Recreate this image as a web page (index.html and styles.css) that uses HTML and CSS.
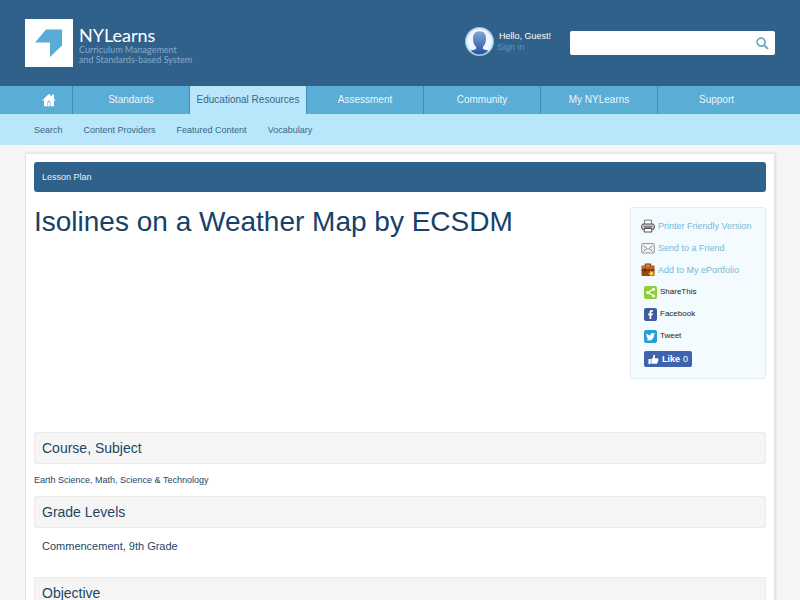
FILE: index.html
```html
<!DOCTYPE html>
<html lang="en">
<head>
<meta charset="utf-8">
<meta name="viewport" content="width=device-width, initial-scale=1">
<title>NYLearns - Isolines on a Weather Map</title>
<link rel="stylesheet" href="styles.css">
</head>
<body>
<header class="header">
  <a class="brand" href="#">
    <svg class="brand-mark" viewBox="0 0 48 48" aria-hidden="true"><path fill="#fff" d="M0 0h48v48H0z"/><path fill="#58acd6" d="M21 10.500h16v16L25 38V23.500H10z"/></svg>
    <span class="brand-text">
      <span class="brand-name">NYLearns</span>
      <span class="brand-tag">Curriculum Management</span>
      <span class="brand-tag">and Standards-based System</span>
    </span>
  </a>
  <div class="user">
    <svg class="avatar" viewBox="0 0 28 28" aria-hidden="true">
      <defs><linearGradient id="face" x1="0" y1="0" x2="0" y2="1"><stop offset="0" stop-color="#84a7d8"/><stop offset="1" stop-color="#28519c"/></linearGradient></defs>
      <circle cx="14" cy="14" r="13.500" fill="#d4ecfb" stroke="#8dc0e6"/>
      <circle cx="14" cy="14" r="11.500" fill="#edf7fd"/>
      <path fill="url(#face)" d="M14 4c4.500 0 6.500 3 6.300 7.500-.1 3.500-1.300 6-3 7.500v2.200c1.500.8 4 1 5.200 1.800a12 12 0 0 1-17 0c1.200-.8 3.700-1 5.200-1.800V19c-1.700-1.500-2.900-4-3-7.500C7.500 7 9.500 4 14 4z"/>
    </svg>
    <div class="user-text">
      <span class="hello">Hello, Guest!</span>
      <a class="signin" href="#">Sign in</a>
    </div>
  </div>
  <form class="search" role="search">
    <input class="search-input" type="search" aria-label="Search">
    <button class="search-button" type="button" aria-label="Go">
      <svg class="search-icon" viewBox="0 0 14 14" aria-hidden="true"><circle cx="5.500" cy="5.500" r="4.300" fill="none" stroke="#69a3bd" stroke-width="1.700"/><path d="M8.800 8.800l4 4" stroke="#69a3bd" stroke-width="2.200"/></svg>
    </button>
  </form>
</header>
<nav class="nav" aria-label="Main">
  <a class="nav-item nav-home" href="#" aria-label="Home"><svg class="home-icon" viewBox="0 0 14 14" aria-hidden="true"><path fill="#fff" d="M7 .8l3 2.800V1.500h2v4L13.800 7.500H12V13.300H2V7.500H.2z"/><path fill="#8fc7e2" d="M5.300 13V9.300a1.700 1.700 0 0 1 3.400 0V13h-.9V9.500H6.200V13z"/></svg></a>
  <a class="nav-item" href="#">Standards</a>
  <a class="nav-item nav-current" href="#" aria-current="page">Educational Resources</a>
  <a class="nav-item" href="#">Assessment</a>
  <a class="nav-item" href="#">Community</a>
  <a class="nav-item" href="#">My NYLearns</a>
  <a class="nav-item" href="#">Support</a>
</nav>
<nav class="subnav" aria-label="Educational Resources">
  <a href="#">Search</a>
  <a href="#">Content Providers</a>
  <a href="#">Featured Content</a>
  <a href="#">Vocabulary</a>
</nav>
<main class="card">
  <div class="banner">Lesson Plan</div>
  <div class="intro">
    <h1 class="title">Isolines on a Weather Map by ECSDM</h1>
    <aside class="tools">
      <a class="tool" href="#"><svg class="tool-icon" viewBox="0 0 14 14" aria-hidden="true"><path fill="#fff" stroke="#777" d="M3.500 5V1.200h7V5"/><rect x=".7" y="5" width="12.600" height="5.500" rx="1.500" fill="#c4c4c4" stroke="#555"/><path stroke="#444" d="M3 8h8"/><path fill="#fff" stroke="#555" d="M3.500 9.500h7l.5 3.500H3z"/></svg>Printer Friendly Version</a>
      <a class="tool" href="#"><svg class="tool-icon" viewBox="0 0 14 14" aria-hidden="true"><rect x=".7" y="2.500" width="12.600" height="9.500" rx=".8" fill="#eee" stroke="#999"/><path fill="#fafafa" stroke="#888" d="M2.500 4.300L7 8.500l4.500-4.200M2.500 10.500L5.500 7.500M11.500 10.500l-3-3"/></svg>Send to a Friend</a>
      <a class="tool" href="#"><svg class="tool-icon" viewBox="0 0 14 14" aria-hidden="true"><path fill="none" stroke="#74401c" stroke-width="1.300" d="M4.500 3V1.200h5V3"/><rect x=".5" y="2.500" width="13" height="10.500" rx="1" fill="#984715"/><path fill="#c4671e" d="M1 3h12v3.500H1z"/><path fill="#63290b" d="M.5 6.500h13v1H.5zM3 5.500h2v3H3z"/><path fill="#fbd04d" d="M9.500 7.200l1.200 1.600 2.200-.3-.9 2 1.200 1.800-2.200-.2-1.500 1.600-.4-2.100-2-.8 1.900-1.100z"/></svg>Add to My ePortfolio</a>
      <a class="share" href="#"><svg class="share-icon" viewBox="0 0 13 13" aria-hidden="true"><rect width="13" height="13" rx="2" fill="#8fcf35"/><path fill="none" stroke="#fff" stroke-width="1.100" d="M9.500 3.300L4 6.500l5.500 3.200"/><circle cx="9.500" cy="3.300" r="1.500" fill="#fff"/><circle cx="3.800" cy="6.500" r="1.500" fill="#fff"/><circle cx="9.500" cy="9.700" r="1.500" fill="#fff"/></svg>ShareThis</a>
      <a class="share" href="#"><svg class="share-icon" viewBox="0 0 13 13" aria-hidden="true"><rect width="13" height="13" rx="2" fill="#3b5c9f"/><path fill="#fff" d="M5.500 11V7.200H4.200V5.400h1.300V4.300c0-1.600.9-2.300 2.200-2.300h1.200v1.800H8c-.5 0-.7.200-.7.700v.9h1.600l-.2 1.800H7.300V11z"/></svg>Facebook</a>
      <a class="share" href="#"><svg class="share-icon" viewBox="0 0 13 13" aria-hidden="true"><rect width="13" height="13" rx="2" fill="#259fdc"/><path fill="#fff" d="M11 3.800l-1 1.100c0 3.400-2.300 5.600-5.100 5.600-1.100 0-2.100-.3-2.900-.8 1 .1 1.900-.2 2.600-.7-.8-.1-1.400-.6-1.700-1.300h.8c-.9-.3-1.400-1-1.400-1.900l.8.200c-.8-.6-1-1.600-.5-2.500 1 1.200 2.300 1.800 3.800 1.900-.3-2.200 2-3.200 3.300-1.900l1.200-.4-.8 1.100z"/></svg>Tweet</a>
      <button class="like" type="button"><svg class="like-icon" viewBox="0 0 12 12" aria-hidden="true"><path fill="#fff" d="M.5 5.500H3v5.300H.5zM3.600 5.700L5.800 3.400V1.200C6.800.2 8 1.200 7.700 2.700l-.4 2h3.200c1.200 0 1.300 1.400.5 1.700.6.500.4 1.400-.3 1.600.4.500.2 1.200-.5 1.400.2.700-.2 1.300-1 1.300H5.500l-1.900-.6z"/></svg><span class="like-label">Like</span> 0</button>
    </aside>
  </div>
  <section>
    <h2 class="section-title">Course, Subject</h2>
    <p class="subjects">Earth Science, Math, Science &amp; Technology</p>
  </section>
  <section>
    <h2 class="section-title">Grade Levels</h2>
    <p class="levels">Commencement, 9th Grade</p>
  </section>
  <section>
    <h2 class="section-title">Objective</h2>
  </section>
</main>
</body>
</html>
```
FILE: styles.css
```css
* {
  box-sizing: border-box;
}

body {
  margin: 0;
  background: #f5f5f5;
  color: #1d4667;
  font-family: "Liberation Sans", Arial, sans-serif;
  font-size: 10px;
  line-height: 12px;
}

a {
  color: inherit;
  text-decoration: none;
}

svg {
  display: block;
  flex: none;
}

.header {
  display: flex;
  align-items: center;
  min-height: 86px;
  padding: 0 25px;
  background: #2f618b;
}

.brand {
  display: flex;
  align-items: center;
  gap: 6px;
  margin-right: auto;
}

.brand-mark {
  width: 48px;
  height: 48px;
}

.brand-text {
  display: flex;
  flex-direction: column;
  padding-top: 4px;
  font-family: Lato, sans-serif;
}

.brand-name {
  color: #fff;
  font-size: 18px;
  line-height: 20px;
}

.brand-tag {
  color: #85aaca;
  font-size: 9px;
  line-height: 10px;
}

.user {
  display: flex;
  align-items: center;
  gap: 3px;
  margin-right: 18px;
  padding-bottom: 4px;
}

.avatar {
  width: 29px;
  height: 29px;
}

.user-text {
  display: flex;
  flex-direction: column;
  padding-top: 2px;
  font-size: 9px;
  line-height: 11px;
}

.hello {
  padding: 0 1px 0 2px;
  color: #fff;
}

.signin {
  color: #5698c7;
}

.search {
  display: flex;
  align-items: center;
  width: 205px;
  height: 24px;
  border-radius: 2px;
  background: #fff;
}

.search-input {
  flex: 1;
  min-width: 0;
  height: 100%;
  padding: 0 6px;
  border: 0;
  background: transparent;
  font: inherit;
}

.search-button {
  padding: 0 6px;
  border: 0;
  background: transparent;
}

.search-icon {
  width: 13px;
  height: 13px;
}

.nav {
  display: grid;
  grid-template-columns: 48px repeat(6, 1fr);
  height: 28px;
  padding: 0 25px;
  background: #5aadd5;
}

.nav-item {
  display: flex;
  align-items: center;
  justify-content: center;
  border-right: 1px solid #3c8db7;
  color: #e9f7ff;
  white-space: nowrap;
}

.nav-item:last-child {
  border-right: 0;
}

.nav-current {
  background: #b8e6fb;
  color: #3a6786;
}

.home-icon {
  width: 14px;
  height: 14px;
}

.subnav {
  display: flex;
  align-items: center;
  gap: 21px;
  height: 31px;
  padding: 0 34px;
  background: #b8e6fb;
  color: #3a6786;
  font-size: 9px;
}

.card {
  margin: 8px 25px 24px;
  padding: 8px;
  border: 1px solid #e6e6e6;
  background: #fff;
  box-shadow: 1px 0 2px #ddd;
}

.banner {
  padding: 9px 8px;
  border-radius: 3px;
  background: #2f618b;
  color: #e8f1f8;
  font-size: 9px;
}

.intro {
  display: flex;
  align-items: flex-start;
  justify-content: space-between;
  gap: 16px;
  min-height: 225px;
  margin-bottom: 15px;
  padding-top: 15px;
}

.title {
  margin: 0;
  color: #164168;
  font-size: 28px;
  font-weight: 400;
  line-height: 30px;
}

.tools {
  display: flex;
  flex-direction: column;
  align-items: flex-start;
  gap: 8px;
  width: 136px;
  padding: 11px 10px;
  border: 1px solid #e0eff5;
  border-radius: 2px;
  background: #f3fbff;
}

.tool,
.share {
  display: flex;
  align-items: center;
  height: 14px;
  white-space: nowrap;
}

.tool {
  gap: 3px;
  color: #7ab8d5;
  font-size: 9px;
}

.tool-icon {
  width: 14px;
  height: 14px;
}

.share {
  gap: 3px;
  padding-left: 3px;
  color: #222;
  font-size: 8px;
}

.share-icon {
  width: 13px;
  height: 13px;
}

.like {
  display: flex;
  align-items: center;
  gap: 3px;
  height: 16px;
  margin-left: 3px;
  padding: 0 4px;
  border: 0;
  border-radius: 2px;
  background: #4063ad;
  color: #fff;
  font: 9px/12px "Liberation Sans", Arial, sans-serif;
}

.like-icon {
  width: 11px;
  height: 11px;
}

.like-label {
  font-weight: 700;
}

.section-title {
  margin: 0;
  padding: 6px 7px;
  border: 1px solid #eaeaea;
  border-radius: 2px;
  background: #f5f5f5;
  color: #1d4667;
  font-size: 14px;
  font-weight: 400;
  line-height: 18px;
}

.subjects {
  margin: 0;
  padding: 10px 0;
  font-size: 9px;
}

.levels {
  margin: 0;
  padding: 12px 8px 25px;
  font-size: 11px;
}
```
